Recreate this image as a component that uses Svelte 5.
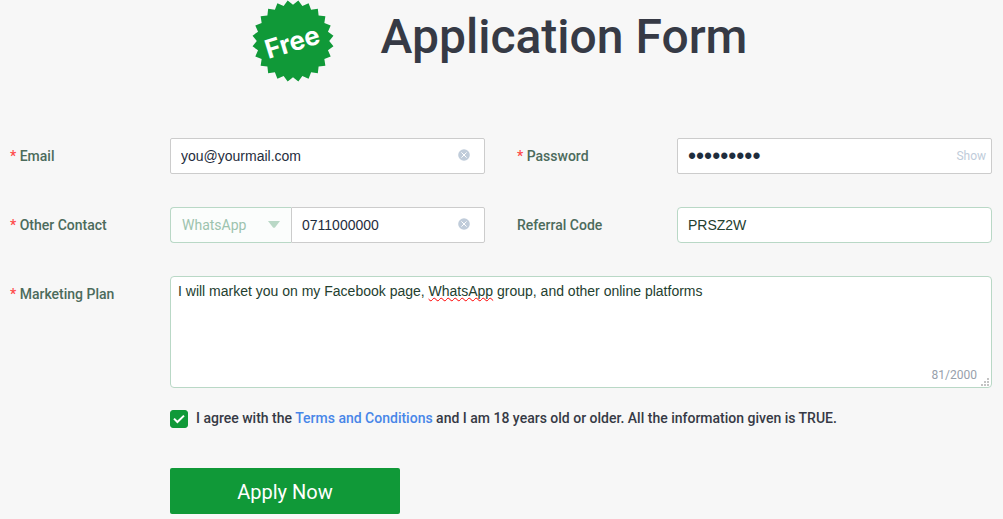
<script>
  let email    = $state("you@yourmail.com");
  let password = $state("123456789");
  let channel  = $state("WhatsApp");
  let contact  = $state("0711000000");
  let referral = $state("PRSZ2W");
  let plan     = $state("I will market you on my Facebook page, WhatsApp group, and other online platforms");
  let agreed   = $state(true);
  let show     = $state(false);

  const PLAN_MAX = 2000;
  const channels = ["WhatsApp", "Skype", "Telegram"];
  const unknown  = /(WhatsApp)/;

  // Odd entries are the words to underline
  let planParts = $derived(plan.split(unknown));

  // 24-pointed seal, alternating inner and outer radius
  const seal = Array.from({ length: 48 }, (_, i) => {
    const a = (i * Math.PI) / 24;
    const r = i % 2 ? 40.8 : 36.2;
    return `${(41 + r * Math.sin(a)).toFixed(2)},${(41 - r * Math.cos(a)).toFixed(2)}`;
  }).join(" ");

  // Grip dots in the corner of the textarea
  const grip = [[7, 1], [4, 4], [7, 4], [1, 7], [4, 7], [7, 7]];
</script>

{#snippet clearIcon()}
  <svg width="12" height="12" viewBox="0 0 12 12" aria-hidden="true">
    <circle cx="6" cy="6" r="5.8" fill="#c0ccda" />
    <path d="M3.4 3.4l5.2 5.2M8.6 3.4L3.4 8.6" stroke="#fff" stroke-width="1" fill="none" />
  </svg>
{/snippet}

<main class="page">
  <header class="head">
    <svg class="seal" viewBox="0 0 82 82" role="img" aria-label="Free">
      <polygon points={seal} fill="#109938" />
      <text x="40" y="51" text-anchor="middle" transform="rotate(-17 41 41)">Free</text>
    </svg>
    <h1>Application Form</h1>
  </header>

  <form class="form" onsubmit={e => e.preventDefault()}>
    <div class="item">
      <label for="email"><i>*</i> Email</label>
      <div class="field">
        <input id="email" class="box" type="text" bind:value={email} autocomplete="off" />
        <button type="button" class="clear" aria-label="Clear email" onclick={() => email = ""}>{@render clearIcon()}</button>
      </div>
    </div>

    <div class="item">
      <label for="password"><i>*</i> Password</label>
      <div class="field">
        <input id="password" class="box secret" type={show ? "text" : "password"} bind:value={password} autocomplete="off" />
        <button type="button" class="show" onclick={() => show = !show}>{show ? "Hide" : "Show"}</button>
      </div>
    </div>

    <div class="item">
      <label for="contact"><i>*</i> Other Contact</label>
      <div class="group">
        <div class="pick">
          <select class="box green" aria-label="Contact type" bind:value={channel}>
            {#each channels as c}
              <option>{c}</option>
            {/each}
          </select>
          <svg class="caret" width="12" height="7" viewBox="0 0 12 7" aria-hidden="true">
            <path d="M0 0h12L7 6.4q-1 .9-2 0z" fill="#b9d8c6" />
          </svg>
        </div>
        <div class="field">
          <input id="contact" class="box" type="text" bind:value={contact} autocomplete="off" />
          <button type="button" class="clear" aria-label="Clear contact" onclick={() => contact = ""}>{@render clearIcon()}</button>
        </div>
      </div>
    </div>

    <div class="item">
      <label for="referral">Referral Code</label>
      <div class="field">
        <input id="referral" class="box green" type="text" bind:value={referral} autocomplete="off" />
      </div>
    </div>

    <div class="item wide">
      <label for="plan"><i>*</i> Marketing Plan</label>
      <div class="field">
        <div class="marks" aria-hidden="true">{#each planParts as part, i}{#if i % 2}<u>{part}</u>{:else}{part}{/if}{/each}</div>
        <textarea id="plan" maxlength={PLAN_MAX} spellcheck="false" bind:value={plan}></textarea>
        <span class="count">{plan.length}/{PLAN_MAX}</span>
        <svg class="grip" width="9" height="9" viewBox="0 0 9 9" aria-hidden="true">
          {#each grip as [x, y]}
            <rect {x} {y} width="2" height="2" fill="#c4c4c4" />
          {/each}
        </svg>
      </div>
    </div>

    <div class="foot">
      <div class="agree">
        <span class="tick">
          <input id="agree" type="checkbox" bind:checked={agreed} />
          {#if agreed}
            <svg width="18" height="18" viewBox="0 0 18 18" aria-hidden="true">
              <path d="M4 8.6l3.4 3.4L14 5.6" fill="none" stroke="#fff" stroke-width="2" />
            </svg>
          {/if}
        </span>
        <label for="agree">I agree with the <a href="#terms">Terms and Conditions</a> and I am 18 years old or older. All the information given is TRUE.</label>
      </div>
      <button type="submit" class="apply">Apply Now</button>
    </div>
  </form>
</main>

<style>
  :global(body) {
    background: #f7f7f7;
  }
  .page {
    box-sizing: border-box;
    padding: 0 11px 5px 9px;
    font-family: Roboto, "Liberation Sans", sans-serif;
    font-size: 14px;
    color: #363a45;
  }
  .page * { box-sizing: border-box; }
  button {
    padding: 0;
    border: 0;
    background: none;
    font-family: inherit;
    cursor: pointer;
  }

  .head {
    display: flex;
    justify-content: center;
    gap: 47px;
    height: 138px;
    padding-right: 2px;
  }
  .seal {
    width: 82px;
    height: 82px;
    flex: none;
  }
  .seal text {
    font-family: Inter, sans-serif;
    font-size: 26px;
    font-weight: 700;
    fill: #fff;
  }
  h1 {
    margin: 0;
    font-size: 48px;
    font-weight: 500;
    line-height: 74px;
    color: #363a45;
  }

  .form {
    display: grid;
    grid-template-columns: 1fr 1fr;
    gap: 33px 31px;
  }
  .item {
    display: flex;
  }
  .item > label {
    width: 161px;
    flex: none;
    padding-left: 1px;
    line-height: 36px;
    font-weight: 500;
    color: #4c6b5c;
  }
  .item i {
    font-style: normal;
    color: #ff4949;
  }
  .wide { grid-column: 1 / -1; }
  .field {
    position: relative;
    flex: 1;
    min-width: 0;
  }
  .box {
    display: block;
    width: 100%;
    height: 36px;
    padding: 0 10px;
    background: #fff;
    border: 1px solid #ccc;
    border-radius: 2px;
    font-family: "Liberation Sans", Arial, sans-serif;
    font-size: 14px;
    color: #1f2d3d;
    outline: none;
  }
  .box.green {
    border-color: #b9d8c6;
    border-radius: 4px;
    color: #24402f;
  }
  .secret[type="password"] { font-size: 23px; }
  .clear {
    position: absolute;
    top: 11px;
    right: 15px;
    width: 12px;
    height: 12px;
  }
  .clear svg { display: block; }
  .show {
    position: absolute;
    top: 0;
    right: 6px;
    line-height: 36px;
    font-size: 12px;
    color: #c0ccda;
  }

  .group {
    display: flex;
    flex: 1;
    min-width: 0;
  }
  .pick {
    position: relative;
    width: 121px;
    flex: none;
  }
  .group select.box {
    appearance: none;
    padding: 0 11px;
    background: #fbfdfc;
    border-right: 0;
    border-radius: 4px 0 0 4px;
    font-family: inherit;
    color: #9dc3ae;
  }
  .group input { border-radius: 0 2px 2px 0; }
  .caret {
    position: absolute;
    top: 14px;
    right: 11px;
    pointer-events: none;
  }

  /* The underlines sit in a layer with the same metrics as the textarea */
  .marks, textarea {
    display: block;
    width: 100%;
    padding: 4px 7px;
    border: 1px solid transparent;
    font-family: "Liberation Sans", Arial, sans-serif;
    font-size: 14px;
    line-height: 21px;
    white-space: pre-wrap;
    overflow-wrap: break-word;
  }
  .marks {
    position: absolute;
    inset: 0;
    color: transparent;
    pointer-events: none;
  }
  .marks u {
    text-decoration: underline wavy #f00 1px;
    text-decoration-skip-ink: none;
    text-underline-offset: 1px;
  }
  textarea {
    height: 112px;
    background: #fff;
    border-color: #b9d8c6;
    border-radius: 4px;
    color: #24402f;
    resize: none;
    outline: none;
  }
  .count {
    position: absolute;
    right: 15px;
    bottom: 5px;
    font-size: 12px;
    line-height: 16px;
    color: #97a0ab;
  }
  .grip {
    position: absolute;
    right: 3px;
    bottom: 2px;
    pointer-events: none;
  }

  .foot {
    grid-column: 1 / -1;
    display: flex;
    flex-direction: column;
    align-items: flex-start;
    gap: 40px;
    margin-top: -11px;
    padding-left: 161px;
  }
  .agree {
    display: flex;
    gap: 8px;
    line-height: 17px;
    font-weight: 500;
    color: #363a45;
  }
  .tick {
    position: relative;
    width: 18px;
    height: 18px;
    flex: none;
  }
  .tick input {
    appearance: none;
    display: block;
    width: 18px;
    height: 18px;
    margin: 0;
    border: 1px solid #109938;
    border-radius: 3px;
    background: #fff;
  }
  .tick input:checked { background: #109938; }
  .tick svg {
    position: absolute;
    inset: 0;
    pointer-events: none;
  }
  .agree a {
    color: #4886e8;
    text-decoration: none;
  }
  .apply {
    width: 230px;
    height: 46px;
    border-radius: 2px;
    background: #109938;
    font-size: 20px;
    line-height: 48px;
    color: #fff;
  }
</style>
